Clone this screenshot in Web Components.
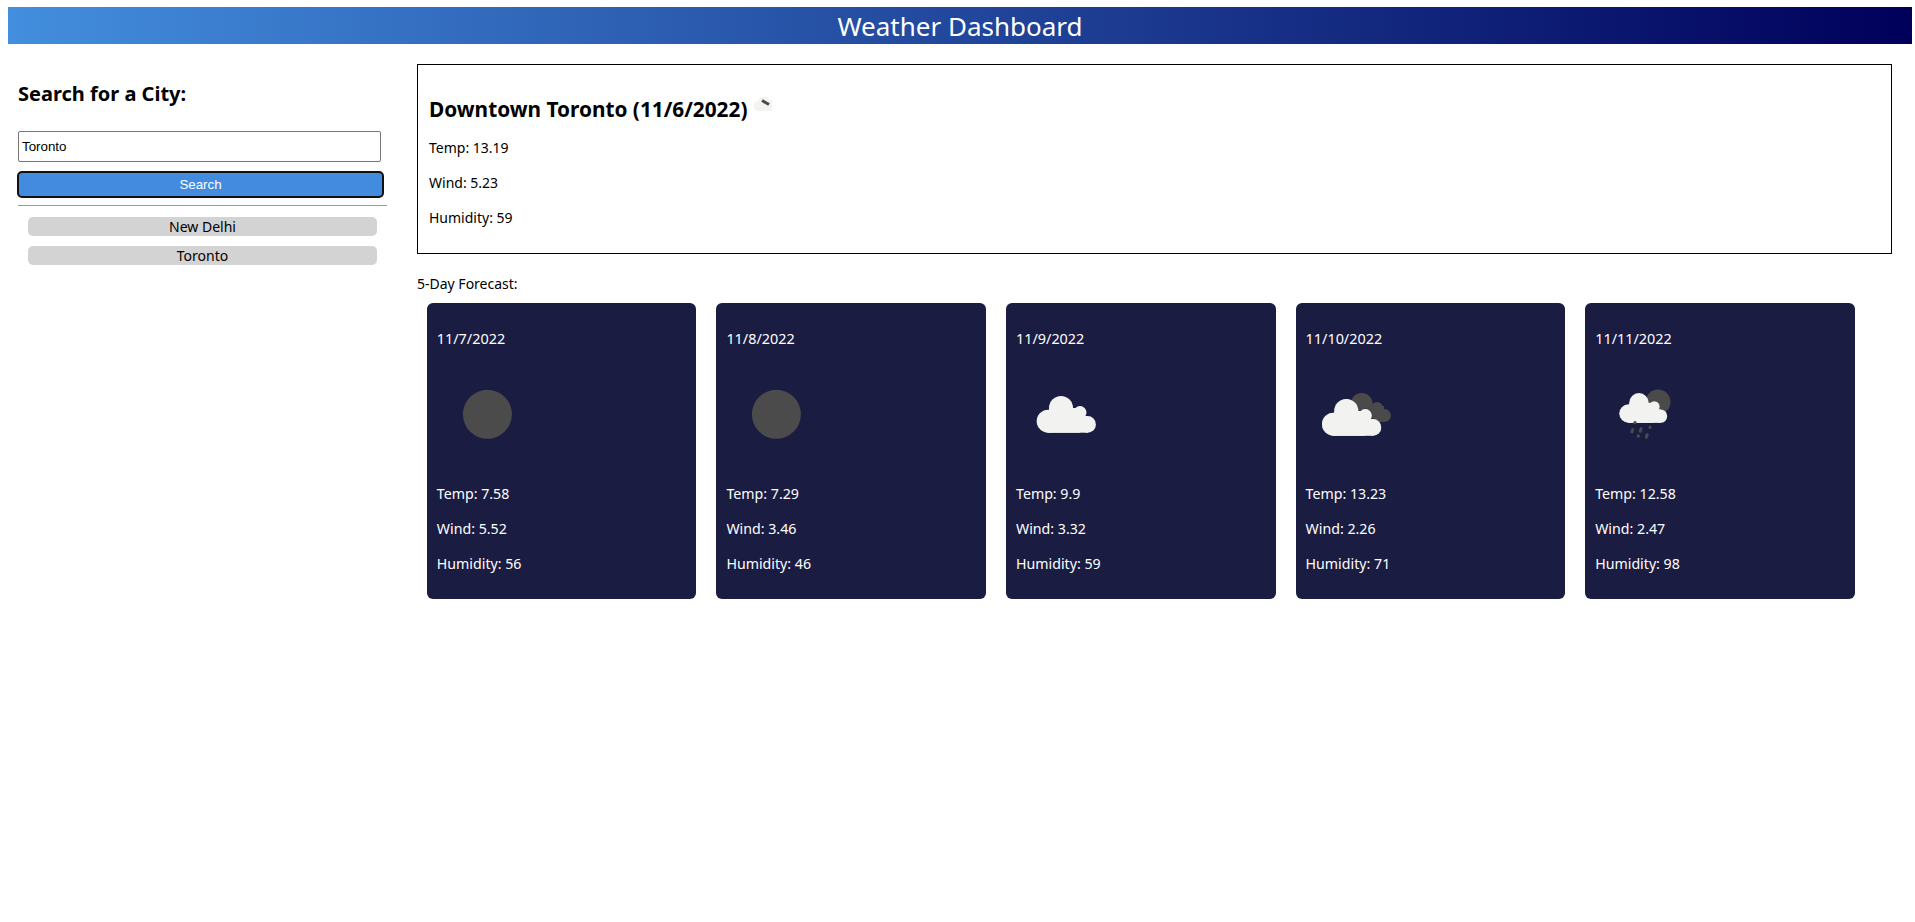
<!DOCTYPE html>
<html lang="en">
<head>
<meta charset="utf-8">
<title>Weather Dashboard</title>
<style>
  html, body { background: #fff; }
  body {
    margin: 7px 0 0 8px;
    width: 1904px;
    font-family: "Noto Sans", "Open Sans", sans-serif;
    color: #000;
  }
</style>
</head>
<body>
<weather-header>Weather Dashboard</weather-header>
<weather-layout>
  <city-search slot="side"></city-search>
  <today-panel slot="main" city="Downtown Toronto (11/6/2022)" temp="13.19" wind="5.23" humidity="59"></today-panel>
  <forecast-list slot="main">
    <forecast-card date="11/7/2022" icon="moon" temp="7.58" wind="5.52" humidity="56"></forecast-card>
    <forecast-card date="11/8/2022" icon="moon" temp="7.29" wind="3.46" humidity="46"></forecast-card>
    <forecast-card date="11/9/2022" icon="cloud" temp="9.9" wind="3.32" humidity="59"></forecast-card>
    <forecast-card date="11/10/2022" icon="clouds" temp="13.23" wind="2.26" humidity="71"></forecast-card>
    <forecast-card date="11/11/2022" icon="rain" temp="12.58" wind="2.47" humidity="98"></forecast-card>
  </forecast-list>
</weather-layout>

<script>
  // one cloud outline, drawn from circles so it can be reused at any spot
  const cloud = (fill) => `
    <g fill="${fill}">
      <circle cx="32.2" cy="57.2" r="11.5"/>
      <circle cx="45" cy="44" r="12"/>
      <circle cx="64" cy="48.5" r="6.5"/>
      <circle cx="71.6" cy="60.4" r="8.3"/>
      <rect x="33" y="44" width="31" height="24.7"/>
      <rect x="31" y="52" width="41" height="16.7"/>
    </g>`;

  const icons = {
    moon: `<circle cx="50.4" cy="50.3" r="24.5" fill="#4b4b4b"/>`,
    cloud: cloud('#f2f2f0'),
    clouds: `
      <g fill="#4a4a4a">
        <circle cx="55.7" cy="40" r="11"/>
        <circle cx="71" cy="44" r="6"/>
        <circle cx="78.5" cy="51.5" r="6.5"/>
        <rect x="50" y="42" width="28" height="16"/>
      </g>
      <g transform="translate(-4.7 3)" stroke="#1b1c42" stroke-width=".6">${cloud('#f2f2f0')}</g>
      <g transform="translate(-4.7 3)">${cloud('#f2f2f0')}</g>`,
    rain: `
      <circle cx="63" cy="38" r="12.5" fill="#4a4a4a"/>
      <g transform="translate(7.5 3.2) scale(.81)">${cloud('#f2f2f0')}</g>
      <g fill="#4a4a4a">
        <circle cx="40" cy="58.7" r="1.6"/>
        <rect x="35.8" y="64" width="3" height="5.4" rx="1.2" transform="rotate(18 37.3 66.7)"/>
        <rect x="44.2" y="63.3" width="3" height="5.4" rx="1.2" transform="rotate(18 45.7 66)"/>
        <rect x="53.6" y="61.6" width="2.8" height="3.4" rx="1.2" transform="rotate(18 55 63.3)"/>
        <rect x="41.8" y="70.3" width="3" height="3.4" rx="1.2" transform="rotate(18 43.3 72)"/>
        <rect x="50.2" y="69.3" width="3" height="5.4" rx="1.2" transform="rotate(18 51.7 72)"/>
      </g>`
  };

  class WeatherHeader extends HTMLElement {
    constructor() {
      super();
      this.attachShadow({ mode: 'open' });
      this.shadowRoot.innerHTML = `
        <style>
          :host {
            display: block;
            height: 37px;
            line-height: 38px;
            text-align: center;
            color: #fff;
            font-size: 26px;
            background: linear-gradient(to right, #438ede, #00005a);
          }
        </style>
        <slot></slot>`;
    }
  }

  class WeatherLayout extends HTMLElement {
    constructor() {
      super();
      this.attachShadow({ mode: 'open' });
      this.shadowRoot.innerHTML = `
        <style>
          :host {
            display: grid;
            grid-template-columns: 409px 1475px;
          }
          .main { padding-top: 20px; }
        </style>
        <div class="side"><slot name="side"></slot></div>
        <div class="main"><slot name="main"></slot></div>`;
    }
  }

  class CitySearch extends HTMLElement {
    constructor() {
      super();
      this.attachShadow({ mode: 'open' });
      this.shadowRoot.innerHTML = `
        <style>
          :host { display: block; padding: 0 0 0 10px; width: 369px; }
          h2 { margin: 0; padding-top: 36px; font-size: 20px; line-height: 27px; font-weight: 700; }
          input {
            display: block;
            box-sizing: border-box;
            width: 363px;
            height: 31px;
            margin: 24px 0 0;
            padding: 1px 3px;
            border: 1px solid #767676;
            border-radius: 2px;
            font: 13.33px "Liberation Sans", Arial, sans-serif;
            color: #000;
            background: #fff;
          }
          button.go {
            display: block;
            box-sizing: border-box;
            width: 367px;
            height: 27px;
            margin: 9px 0 0 -1px;
            padding: 0 0 1px;
            border: 2px solid #111;
            border-radius: 5px;
            background: #428bdf;
            color: #fff;
            font: 13.33px "Liberation Sans", Arial, sans-serif;
          }
          hr { margin: 7px 0 0; border: 0; border-top: 1px solid #9a9a9a; height: 1px; width: 369px; }
          .saved { display: flex; flex-direction: column; gap: 10px; margin: 10px 0 0 10px; }
          .saved button {
            width: 349px;
            height: 19px;
            padding: 0;
            border: 0;
            border-radius: 5px;
            background: #d3d3d3;
            color: #000;
            font: 14px/19px "Noto Sans", "Open Sans", sans-serif;
          }
        </style>
        <h2>Search for a City:</h2>
        <input type="text" value="Toronto">
        <button class="go">Search</button>
        <hr>
        <div class="saved">
          <button>New Delhi</button>
          <button>Toronto</button>
        </div>`;
    }
  }

  class TodayPanel extends HTMLElement {
    constructor() {
      super();
      this.attachShadow({ mode: 'open' });
      const a = (n) => this.getAttribute(n);
      this.shadowRoot.innerHTML = `
        <style>
          :host {
            display: block;
            box-sizing: border-box;
            height: 190px;
            border: 1px solid #000;
            padding: 0 11px;
          }
          h2 {
            display: flex;
            align-items: flex-start;
            gap: 5px;
            margin: 0;
            padding-top: 27px;
            height: 65px;
            box-sizing: border-box;
            font-size: 20.8px;
            line-height: 35px;
            font-weight: 700;
          }
          svg { display: block; margin-top: 5px; }
          p { margin: 0; height: 35px; line-height: 35px; font-size: 14px; }
        </style>
        <h2>${a('city')}
          <svg width="20" height="16" viewBox="0 0 20 16">
            <g transform="translate(-7 -15) scale(.42)" opacity=".3">${cloud('#d9d9d7')}</g>
            <path d="M10 3.5 L17 7.5" stroke="#4a4a4a" stroke-width="3" fill="none"/>
          </svg>
        </h2>
        <p>Temp: ${a('temp')}</p>
        <p>Wind: ${a('wind')}</p>
        <p>Humidity: ${a('humidity')}</p>`;
    }
  }

  class ForecastList extends HTMLElement {
    constructor() {
      super();
      this.attachShadow({ mode: 'open' });
      this.shadowRoot.innerHTML = `
        <style>
          :host { display: block; }
          .title { margin: 19px 0 0; height: 21px; line-height: 21px; font-size: 14px; }
          .cards {
            display: grid;
            grid-template-columns: repeat(5, 269.6px);
            gap: 20px;
            margin: 9px 0 0 9.8px;
          }
        </style>
        <div class="title">5-Day Forecast:</div>
        <div class="cards"><slot></slot></div>`;
    }
  }

  class ForecastCard extends HTMLElement {
    constructor() {
      super();
      this.attachShadow({ mode: 'open' });
      const a = (n) => this.getAttribute(n);
      this.shadowRoot.innerHTML = `
        <style>
          :host {
            display: block;
            box-sizing: border-box;
            height: 296px;
            padding: 18px 10px 0;
            border-radius: 6px;
            background: #1b1c42;
            color: #fff;
            font-size: 14.2px;
          }
          p { margin: 0; height: 35px; line-height: 35px; }
          .date { font-size: 14.4px; }
          svg { display: block; width: 100px; height: 100px; margin: 8px 0 12px; }
        </style>
        <p class="date">${a('date')}</p>
        <svg viewBox="0 0 100 100">${icons[a('icon')]}</svg>
        <p>Temp: ${a('temp')}</p>
        <p>Wind: ${a('wind')}</p>
        <p>Humidity: ${a('humidity')}</p>`;
    }
  }

  customElements.define('weather-header', WeatherHeader);
  customElements.define('weather-layout', WeatherLayout);
  customElements.define('city-search', CitySearch);
  customElements.define('today-panel', TodayPanel);
  customElements.define('forecast-list', ForecastList);
  customElements.define('forecast-card', ForecastCard);
</script>
</body>
</html>
